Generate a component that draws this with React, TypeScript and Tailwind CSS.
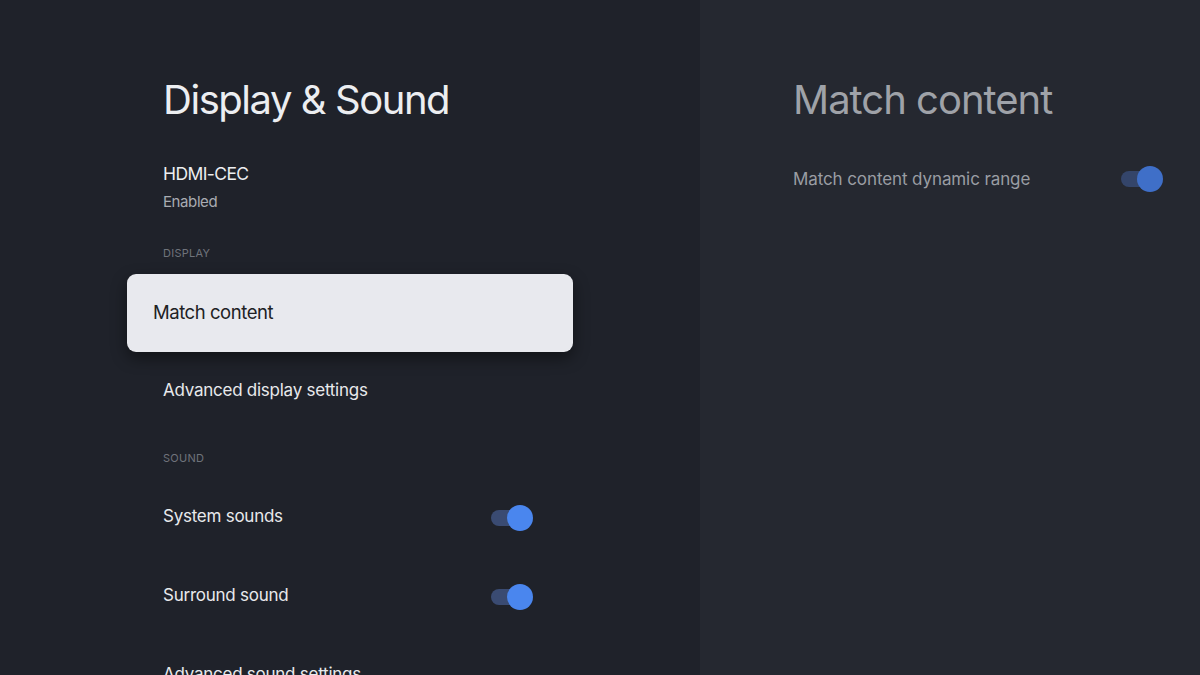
import React from 'react';

const font = { fontFamily: 'Inter, "Open Sans", sans-serif' };

function Toggle({ dim = false }: { dim?: boolean }) {
  return (
    <div className="relative h-[26px] w-[42px] shrink-0">
      <div className={`absolute left-0 top-[5px] h-[16px] w-[36px] rounded-full ${dim ? 'bg-[#34456a]' : 'bg-[#3a4b72]'}`} />
      <div className={`absolute right-0 top-0 h-[26px] w-[26px] rounded-full ${dim ? 'bg-[#3f6fc8]' : 'bg-[#4a86ee]'}`} />
    </div>
  );
}

function Row({ label, toggle }: { label: string; toggle?: boolean }) {
  return (
    <div className="flex h-[79px] items-center justify-between pl-[36px] pr-[40px]">
      <span className="pb-[3px] text-[17px] leading-[24px] tracking-[-0.25px] text-[#e8e9ec]">{label}</span>
      {toggle && <Toggle />}
    </div>
  );
}

function SectionLabel({ children }: { children: React.ReactNode }) {
  return (
    <div className="pl-[36px] text-[11px] uppercase leading-[16px] tracking-wide text-[#6f737b]">{children}</div>
  );
}

export default function App() {
  return (
    <div className="flex h-[675px] w-[1200px] overflow-hidden" style={font}>
      {/* Left: main menu */}
      <div className="w-[700px] shrink-0 bg-[#1f222a] pl-[127px] pt-[76px]">
        <div className="w-[446px]">
          <h1 className="pl-[36px] text-[40px] leading-[48px] tracking-[-1.45px] text-[#eceef1]">Display &amp; Sound</h1>

          <div className="mt-[38px] pl-[36px]">
            <div className="text-[17.5px] leading-[24px] tracking-[-0.6px] text-[#eceef1]">HDMI-CEC</div>
            <div className="mt-[6px] text-[15px] leading-[20px] tracking-[-0.4px] text-[#a9acb2]">Enabled</div>
          </div>

          <div className="mt-[33px]">
            <SectionLabel>Display</SectionLabel>
          </div>

          <div className="mt-[13px] flex h-[78px] items-center rounded-[9px] bg-[#e8e9ee] px-[26px] shadow-[0_6px_16px_rgba(0,0,0,0.45)]">
            <span className="pb-[3px] text-[18.5px] leading-[24px] tracking-[-0.45px] text-[#202124]">Match content</span>
          </div>

          <Row label="Advanced display settings" />

          <div className="mt-[19px]">
            <SectionLabel>Sound</SectionLabel>
          </div>

          <div className="mt-[12px]">
            <Row label="System sounds" toggle />
            <Row label="Surround sound" toggle />
            <Row label="Advanced sound settings" />
          </div>
        </div>
      </div>

      {/* Right: detail pane */}
      <div className="flex-1 bg-[#252830] pl-[93px] pr-[37px] pt-[76px]">
        <h2 className="text-[40px] leading-[48px] tracking-[-1px] text-[#9fa2a8]">Match content</h2>
        <div className="mt-[42px] flex h-[26px] items-center justify-between">
          <span className="text-[17px] leading-[24px] tracking-[-0.1px] text-[#9a9da3]">Match content dynamic range</span>
          <Toggle dim />
        </div>
      </div>
    </div>
  );
}
